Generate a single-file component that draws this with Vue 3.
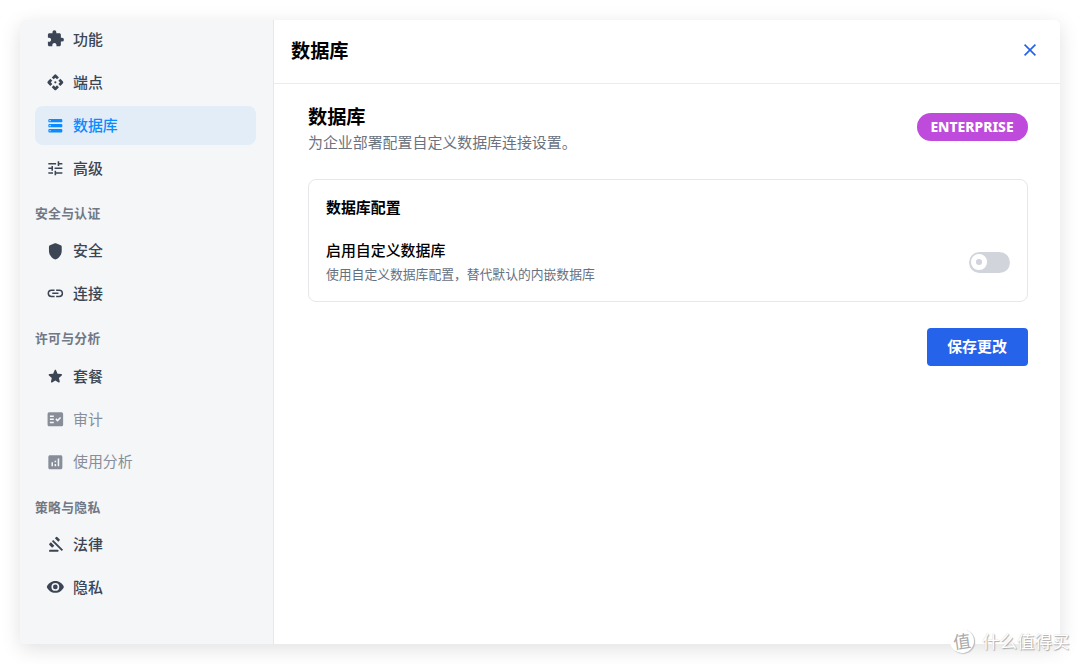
<script setup>
import { ref } from 'vue'

const active = ref('database')
const customDb = ref(false)

const groups = [
  {
    title: '',
    items: [
      { key: 'features', label: '功能', box: '-0.5 0.8 24.5 24.5', icon: 'M20.5 11H19V7c0-1.1-.9-2-2-2h-4V3.5a2.5 2.5 0 0 0-5 0V5H4c-1.1 0-1.99.9-1.99 2v3.8H3.5c1.49 0 2.7 1.21 2.7 2.7s-1.21 2.7-2.7 2.7H2V20c0 1.1.9 2 2 2h3.8v-1.5c0-1.49 1.21-2.7 2.7-2.7s2.7 1.21 2.7 2.7V22H17c1.1 0 2-.9 2-2v-4h1.5a2.5 2.5 0 0 0 0-5z' },
      { key: 'endpoints', label: '端点', icon: 'M13 13a1.41 1.41 0 0 1-2 0 1.41 1.41 0 0 1 0-2 1.41 1.41 0 0 1 2 0 1.41 1.41 0 0 1 0 2zM12 6l2.12 2.12 2.5-2.5-3.2-3.2a2 2 0 0 0-2.84 0l-3.2 3.2 2.5 2.5L12 6zm-6 6 2.12-2.12-2.5-2.5-3.2 3.2a2 2 0 0 0 0 2.84l3.2 3.2 2.5-2.5L6 12zm12 0-2.12 2.12 2.5 2.5 3.2-3.2a2 2 0 0 0 0-2.84l-3.2-3.2-2.5 2.5L18 12zm-6 6-2.12-2.12-2.5 2.5 3.2 3.2a2 2 0 0 0 2.84 0l3.2-3.2-2.5-2.5L12 18z' },
      { key: 'database', label: '数据库', box: '0 -0.8 24 24', icon: 'M4.500 3h15a1.500 1.500 0 0 1 1.500 1.500v1.300a1.500 1.500 0 0 1-1.500 1.500h-15A1.500 1.500 0 0 1 3 5.800V4.500A1.500 1.500 0 0 1 4.500 3zM4.500 4.400v1.500H6V4.400zM4.500 9.500h15A1.500 1.500 0 0 1 21 11v1.300a1.500 1.500 0 0 1-1.500 1.500h-15A1.500 1.500 0 0 1 3 12.300V11a1.500 1.500 0 0 1 1.500-1.500zM4.500 10.900v1.500H6v-1.500zM4.500 16h15a1.500 1.500 0 0 1 1.500 1.500v1.300a1.500 1.500 0 0 1-1.500 1.500h-15A1.500 1.500 0 0 1 3 18.800v-1.300A1.500 1.500 0 0 1 4.500 16zM4.500 17.400v1.500H6v-1.500z' },
      { key: 'advanced', label: '高级', icon: 'M3 17v2h6v-2H3zM3 5v2h10V5H3zm10 16v-2h8v-2h-8v-2h-2v6h2zM7 9v2H3v2h4v2h2V9H7zm14 4v-2H11v2h10zm-6-4h2V7h4V5h-4V3h-2v6z' }
    ]
  },
  {
    title: '安全与认证',
    items: [
      { key: 'security', label: '安全', icon: 'M11.300 1.700l-6.200 2.400A2 2 0 0 0 3.800 6v5.100c0 5.200 3.400 10 8.200 11.300 4.800-1.300 8.200-6.100 8.200-11.300V6a2 2 0 0 0-1.300-1.900l-6.200-2.400a2 2 0 0 0-1.400 0z' },
      { key: 'connections', label: '连接', icon: 'M3.900 12c0-1.710 1.390-3.100 3.100-3.100h4V7H7a5 5 0 0 0 0 10h4v-1.900H7A3.100 3.100 0 0 1 3.900 12zM8 13h8v-2H8v2zm9-6h-4v1.900h4a3.100 3.100 0 0 1 0 6.200h-4V17h4a5 5 0 0 0 0-10z' }
    ]
  },
  {
    title: '许可与分析',
    items: [
      { key: 'plan', label: '套餐', icon: 'm12 17.270 4.150 2.510c.760.460 1.690-.220 1.490-1.080l-1.100-4.720 3.670-3.180c.670-.580.310-1.680-.570-1.750l-4.830-.410-1.890-4.460c-.340-.810-1.500-.810-1.840 0L9.190 8.630l-4.830.410c-.880.070-1.240 1.170-.570 1.750l3.670 3.180-1.100 4.720c-.200.860.730 1.540 1.490 1.080L12 17.270z' },
      { key: 'audit', label: '审计', disabled: true, icon: 'M20 3H4a2 2 0 0 0-2 2v14c0 1.100.900 2 2 2h16a2 2 0 0 0 2-2V5a2 2 0 0 0-2-2zM10 17H5v-2h5v2zm0-4H5v-2h5v2zm0-4H5V7h5v2zm4.820 6L12 12.160l1.410-1.410 1.410 1.420L17.990 9l1.420 1.420L14.820 15z' },
      { key: 'analytics', label: '使用分析', disabled: true, icon: 'M19 3H5c-1.100 0-2 .900-2 2v14c0 1.100.900 2 2 2h14c1.100 0 2-.900 2-2V5c0-1.100-.900-2-2-2zM9 17H7v-5h2v5zm4 0h-2v-3h2v3zm0-5h-2v-2h2v2zm4 5h-2V7h2v10z' }
    ]
  },
  {
    title: '策略与隐私',
    items: [
      { key: 'legal', label: '法律', icon: 'M5 19h10a1.200 1.200 0 0 1 0 2.400H4V20a1 1 0 0 1 1-1zM4.300 11.300l2-2 4.400 4.400-2 2a1 1 0 0 1-1.400 0l-3-3a1 1 0 0 1 0-1.400zM11.400 4.200l1.600-1.600a1 1 0 0 1 1.400 0l3 3a1 1 0 0 1 0 1.400l-1.600 1.600zM7.600 8l1.700-1.700L21.900 18.900l-1.700 1.700z' },
      { key: 'privacy', label: '隐私', icon: 'M12 4C7 4 2.730 7.110 1 11.500 2.730 15.890 7 19 12 19s9.270-3.110 11-7.500C21.270 7.110 17 4 12 4zm0 12.500a5 5 0 1 1 0-10 5 5 0 0 1 0 10zm0-8a3 3 0 1 0 0 6 3 3 0 0 0 0-6z' }
    ]
  }
]

function select(item) {
  if (!item.disabled) active.value = item.key
}
</script>

<template>
  <div class="page">
    <div class="modal">
      <nav class="sidebar">
        <div v-for="group in groups" :key="group.title" class="group">
          <h4 v-if="group.title">{{ group.title }}</h4>
          <div
            v-for="item in group.items"
            :key="item.key"
            class="item"
            :class="{ active: active === item.key, disabled: item.disabled }"
            @click="select(item)"
          >
            <svg :viewBox="item.box || '0 0 24 24'"><path :d="item.icon" :fill-rule="item.key === 'legal' ? 'nonzero' : 'evenodd'" /></svg>
            <span>{{ item.label }}</span>
          </div>
        </div>
      </nav>
      <main>
        <header>
          <h2>数据库</h2>
          <button class="close" aria-label="关闭">
            <svg viewBox="0 0 24 24"><path d="M5.500 5.500l13 13M18.500 5.500l-13 13" /></svg>
          </button>
        </header>
        <div class="content">
          <div class="intro">
            <div>
              <h3>数据库</h3>
              <p>为企业部署配置自定义数据库连接设置。</p>
            </div>
            <span class="badge">ENTERPRISE</span>
          </div>
          <div class="card">
            <h5>数据库配置</h5>
            <div class="setting">
              <div>
                <div class="label">启用自定义数据库</div>
                <div class="desc">使用自定义数据库配置，替代默认的内嵌数据库</div>
              </div>
              <div class="switch" :class="{ on: customDb }" @click="customDb = !customDb">
                <div class="thumb"></div>
              </div>
            </div>
          </div>
          <button class="save">保存更改</button>
        </div>
      </main>
    </div>
    <div class="watermark">
      <span class="logo">值</span>
      <span>什么值得买</span>
    </div>
  </div>
</template>

<style>
body {
  background: #fff;
}
</style>

<style scoped>
.page {
  position: relative;
  box-sizing: border-box;
  width: 1080px;
  height: 664px;
  padding: 20px;
  overflow: hidden;
  font-family: "Noto Sans", "Noto Sans CJK SC", sans-serif;
  font-size: 14.93px;
}
h2, h3, h4, h5, p {
  margin: 0;
}
.modal {
  display: flex;
  width: 1040px;
  height: 624px;
  border-radius: 5px;
  background: #fff;
  box-shadow: 0 5px 20px rgba(0, 0, 0, 0.12);
}
.sidebar {
  box-sizing: border-box;
  width: 254px;
  padding: 0.6px 17px 0 15px;
  border-right: 1px solid #e5e7eb;
  border-radius: 5px 0 0 5px;
  background: #f4f6f8;
}
.group h4 {
  height: 39.5px;
  line-height: 43.5px;
  font-size: 12.8px;
  font-weight: 600;
  letter-spacing: 0.3px;
  color: #717885;
}
.item {
  display: flex;
  align-items: center;
  height: 38.4px;
  margin-bottom: 4.5px;
  padding-left: 11px;
  gap: 8.3px;
  border-radius: 8px;
  color: #3b4554;
  font-weight: 500;
  cursor: pointer;
}
.item svg {
  width: 18.7px;
  height: 18.7px;
  fill: currentColor;
}
.item span {
  padding-bottom: 2px;
}
.item.active {
  background: #e3edf8;
  color: #0a8bff;
}
.item.disabled {
  color: #888e99;
  font-weight: 400;
  cursor: not-allowed;
}
main {
  flex: 1;
}
header {
  display: flex;
  align-items: center;
  justify-content: space-between;
  box-sizing: border-box;
  height: 64px;
  padding: 0 20px 3px 17px;
  border-bottom: 1px solid #e9ebee;
}
h2, h3 {
  font-size: 19.2px;
  line-height: 28px;
  font-weight: 700;
  color: #000;
}
h2 {
  padding-top: 2px;
}
.close {
  display: flex;
  padding: 0;
  border: none;
  background: none;
  cursor: pointer;
}
.close svg {
  width: 20px;
  height: 20px;
  fill: none;
  stroke: #2563eb;
  stroke-width: 2;
}
.content {
  display: flex;
  flex-direction: column;
  padding: 19px 32px 0 34px;
}
.intro {
  display: flex;
  align-items: center;
  justify-content: space-between;
}
.intro p {
  height: 24px;
  line-height: 22px;
  color: #6b7280;
}
.badge {
  box-sizing: border-box;
  width: 111px;
  height: 28px;
  margin-top: -5px;
  padding-right: 1px;
  border-radius: 14px;
  background: #be4bdb;
  color: #fff;
  font-size: 13.87px;
  font-weight: 800;
  line-height: 28px;
  text-align: center;
}
.card {
  box-sizing: border-box;
  height: 123px;
  margin-top: 24px;
  padding: 16px 17px;
  border: 1px solid #e5e7eb;
  border-radius: 8px;
}
h5 {
  font-size: 14.93px;
  line-height: 23px;
  font-weight: 700;
  color: #000;
}
.setting {
  display: flex;
  align-items: center;
  justify-content: space-between;
  margin-top: 19px;
}
.label {
  line-height: 24px;
  font-weight: 500;
  color: #000;
}
.desc {
  font-size: 12.8px;
  line-height: 24px;
  color: #66717f;
}
.switch {
  display: flex;
  align-items: center;
  box-sizing: border-box;
  width: 41px;
  height: 21px;
  padding: 0 2px;
  border-radius: 11px;
  background: #d1d5db;
}
.switch.on {
  justify-content: flex-end;
  background: #2563eb;
}
.thumb {
  box-sizing: border-box;
  width: 15.5px;
  height: 15.5px;
  border: 5px solid #fff;
  border-radius: 50%;
}
.save {
  align-self: flex-end;
  width: 101px;
  height: 38px;
  margin-top: 26px;
  padding: 0 1px 3px 0;
  border: none;
  border-radius: 4px;
  background: #2563eb;
  color: #fff;
  font-family: inherit;
  font-size: 14.93px;
  font-weight: 600;
  cursor: pointer;
}
.watermark {
  position: absolute;
  left: 950px;
  top: 629px;
  display: flex;
  align-items: center;
  gap: 8px;
  color: #fff;
  font-size: 17.5px;
  line-height: 24px;
  white-space: nowrap;
  text-shadow: 1px 1px 1px #aaa, 0 0 1px #ccc;
}
.logo {
  width: 24px;
  height: 24px;
  border-radius: 50%;
  background: #fff;
  box-shadow: 1px 1px 1px #bbb;
  color: #aaa;
  text-align: center;
  text-shadow: none;
  transform: rotate(-8deg);
}
</style>
